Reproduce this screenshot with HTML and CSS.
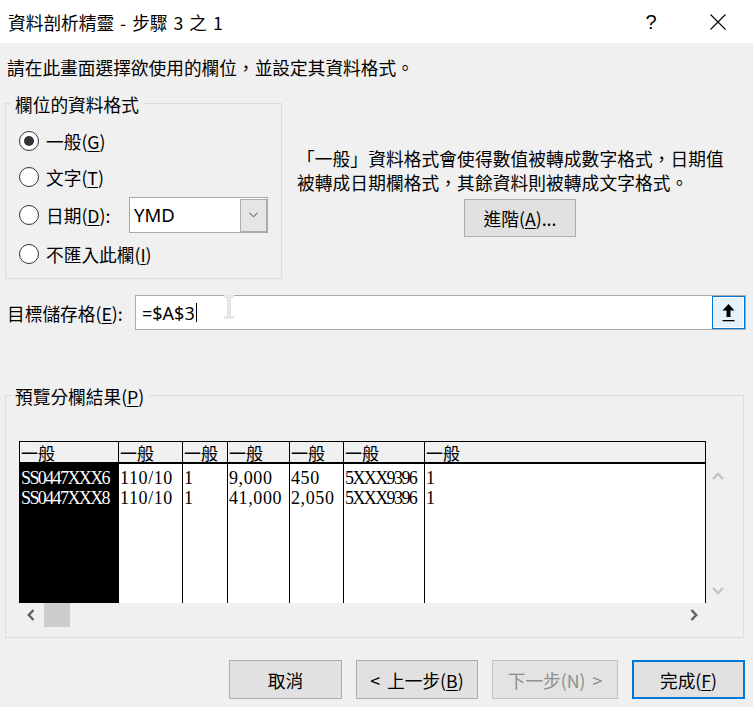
FILE: index.html
```html
<!DOCTYPE html>
<html lang="zh-Hant">
<head>
<meta charset="utf-8">
<title>資料剖析精靈 - 步驟 3 之 1</title>
<link rel="stylesheet" href="styles.css">
</head>
<body>
<div class="titlebar">
  <span class="title">資料剖析精靈 - 步驟 3 之 1</span>
  <span class="help">?</span>
  <span class="close"><svg width="16" height="16" viewBox="0 0 16 16"><path d="M0.5 0.5 L15.5 15.5 M15.5 0.5 L0.5 15.5" stroke="#000" stroke-width="1.1" fill="none"/></svg></span>
</div>
<div class="content">
  <p class="intro">請在此畫面選擇欲使用的欄位，並設定其資料格式。</p>

  <div class="format-row">
    <div class="group format-group">
      <span class="legend">欄位的資料格式</span>
      <div class="radios">
        <div class="radio-row"><span class="radio checked"></span><span class="label">一般(<u>G</u>)</span></div>
        <div class="radio-row"><span class="radio"></span><span class="label">文字(<u>T</u>)</span></div>
        <div class="radio-row date-row"><span class="radio"></span><span class="label date-label">日期(<u>D</u>):</span>
          <div class="combo">
            <span class="combo-value">YMD</span>
            <span class="combo-btn"><svg width="9" height="6" viewBox="0 0 9 6"><path d="M0.5 0.8 L4.5 4.8 L8.5 0.8" stroke="#444" stroke-width="1" fill="none"/></svg></span>
          </div>
        </div>
        <div class="radio-row"><span class="radio"></span><span class="label">不匯入此欄(<u>I</u>)</span></div>
      </div>
    </div>
    <div class="desc">
      <p class="desc-text">「一般」資料格式會使得數值被轉成數字格式，日期值<br>被轉成日期欄格式，其餘資料則被轉成文字格式。</p>
      <button class="btn advanced">進階(<u>A</u>)...</button>
    </div>
  </div>

  <div class="target-row">
    <span class="target-label">目標儲存格(<u>E</u>):</span>
    <div class="ref-input">
      <span class="ref-text">=$A$3<span class="caret"></span></span>
      <svg class="ibeam" width="14" height="24" viewBox="0 0 14 24"><path d="M2 1 H12 M7 1 V23 M2 23 H12" stroke="#c8c8c8" stroke-width="3" fill="none"/><path d="M2 1 H12 M7 1 V23 M2 23 H12" stroke="#f4f4f4" stroke-width="1.4" fill="none"/></svg>
      <span class="ref-btn"><svg width="13" height="18" viewBox="0 0 13 18"><polygon points="6.5,0 12.5,6.5 8.5,6.5 8.5,13 4.5,13 4.5,6.5 0.5,6.5" fill="#000"/><rect x="0.5" y="16" width="12" height="1.3" fill="#000"/></svg></span>
    </div>
  </div>

  <div class="group preview-group">
    <span class="legend">預覽分欄結果(<u>P</u>)</span>
    <div class="preview">
      <div class="cols head">
        <div class="cell">一般</div>
        <div class="cell">一般</div>
        <div class="cell">一般</div>
        <div class="cell">一般</div>
        <div class="cell">一般</div>
        <div class="cell">一般</div>
        <div class="cell">一般</div>
      </div>
      <div class="corner"></div>
      <div class="cols data">
        <div class="cell sel tight">SS0447XXX6<br>SS0447XXX8</div>
        <div class="cell num">110/10<br>110/10</div>
        <div class="cell num">1<br>1</div>
        <div class="cell num">9,000<br>41,000</div>
        <div class="cell num">450<br>2,050</div>
        <div class="cell tight">5XXX9396<br>5XXX9396</div>
        <div class="cell num">1<br>1</div>
      </div>
      <div class="vscroll">
        <span class="sbtn"><svg width="12" height="8" viewBox="0 0 12 8"><path d="M1 7 L6 2 L11 7" stroke="#c4c4c4" stroke-width="2.4" fill="none"/></svg></span>
        <span class="sbtn"><svg width="12" height="8" viewBox="0 0 12 8"><path d="M1 1 L6 6 L11 1" stroke="#c4c4c4" stroke-width="2.4" fill="none"/></svg></span>
      </div>
      <div class="hscroll">
        <span class="sbtn"><svg width="8" height="12" viewBox="0 0 8 12"><path d="M6.5 1 L1.8 6 L6.5 11" stroke="#606060" stroke-width="2.4" fill="none"/></svg></span>
        <span class="thumb"></span>
        <span class="sbtn right"><svg width="8" height="12" viewBox="0 0 8 12"><path d="M1.5 1 L6.2 6 L1.5 11" stroke="#606060" stroke-width="2.4" fill="none"/></svg></span>
      </div>
    </div>
  </div>

  <div class="buttons">
    <button class="btn b-cancel">取消</button>
    <button class="btn b-back">&lt; 上一步(<u>B</u>)</button>
    <button class="btn b-next" disabled>下一步(N) &gt;</button>
    <button class="btn b-finish">完成(<u>F</u>)</button>
  </div>
</div>
</body>
</html>
```

FILE: styles.css
```css
* { box-sizing: border-box; }
html, body { margin: 0; padding: 0; }
body {
  width: 753px;
  height: 707px;
  overflow: hidden;
  background: #f0f0f0;
  font-family: "Noto Sans CJK TC", "Noto Sans", sans-serif;
  font-size: 17.7px;
  color: #000;
}
u { text-decoration-thickness: 1px; text-underline-offset: 2px; }

.titlebar {
  height: 43px;
  background: #fff;
  display: flex;
  align-items: center;
  padding-left: 8px;
  padding-right: 12px;
}
.title { flex: 1; line-height: 24px; word-spacing: 2px; }
.help {
  width: 30px;
  text-align: center;
  font-family: "Liberation Sans", sans-serif;
  font-size: 20px;
  line-height: 24px;
}
.close {
  width: 46px;
  margin-left: 29px;
  display: flex;
  justify-content: center;
}

.content { padding-left: 5px; }
.intro { margin: 12px 0 0 2px; line-height: 24px; }

.group { border: 1px solid #dcdcdc; }
.legend {
  display: block;
  width: fit-content;
  margin: -12px 0 0 5px;
  padding: 0 4px;
  line-height: 24px;
  background: #f0f0f0;
}

.format-row { display: flex; margin-top: 24px; }
.format-group { width: 277px; height: 176px; flex: none; }
.radios {
  display: flex;
  flex-direction: column;
  gap: 6px;
  margin-top: 10px;
  padding-left: 13px;
}
.radio-row { display: flex; align-items: center; height: 30px; }
.date-row { height: 36px; margin-top: -1px; }
.radio {
  width: 20px;
  height: 20px;
  flex: none;
  border: 1px solid #333;
  border-radius: 50%;
  background: #fff;
  display: flex;
  align-items: center;
  justify-content: center;
}
.radio.checked::after {
  content: "";
  width: 10px;
  height: 10px;
  border-radius: 50%;
  background: #333;
}
.label { margin-left: 7px; line-height: 24px; }
.date-label { width: 83px; flex: none; }
.combo {
  width: 139px;
  height: 36px;
  border: 1px solid #a9a9a9;
  background: #fff;
  display: flex;
  align-items: center;
}
.combo-value {
  flex: 1;
  padding-left: 4px;
  font-family: "Noto Sans", sans-serif;
  font-size: 18.5px;
  line-height: 24px;
}
.combo-btn {
  width: 27px;
  height: 33px;
  border: 1px solid #adadad;
  background: #e5e5e5;
  display: flex;
  align-items: center;
  justify-content: center;
}

.desc { margin-left: 15px; padding-top: 43px; }
.desc-text { margin: 0; line-height: 24px; white-space: nowrap; letter-spacing: 0.1px; }
.btn {
  font: inherit;
  color: #000;
  background: #e1e1e1;
  border: 1px solid #adadad;
  padding: 0;
  line-height: 24px;
  height: 39px;
}
.advanced { display: block; width: 112px; height: 38px; margin: 5px 0 0 167px; }

.target-row { display: flex; align-items: center; margin-top: 16px; }
.target-label { width: 128px; margin-left: 2px; line-height: 24px; flex: none; }
.ref-input {
  position: relative;
  width: 611px;
  height: 35px;
  border: 1px solid #ababab;
  background: #fff;
  display: flex;
  align-items: center;
}
.ref-text {
  flex: 1;
  display: flex;
  align-items: center;
  padding-left: 6px;
  font-family: "Noto Sans", sans-serif;
  font-size: 18px;
  line-height: 24px;
}
.caret { width: 1px; height: 19px; background: #000; margin-left: 1px; }
.ibeam { position: absolute; left: 86px; top: -1px; }
.ref-btn {
  width: 33px;
  height: 33px;
  border: 1px solid #0078d7;
  background: #e5f1fb;
  box-shadow: inset 0 0 0 1px #fff;
  display: flex;
  align-items: center;
  justify-content: center;
}

.preview-group { width: 739px; height: 243px; margin-top: 65px; }
.preview {
  margin: 33px 0 0 13px;
  display: grid;
  grid-template-columns: 687px 24px;
  grid-template-rows: 23px 139px 24px;
}
.cols { display: grid; grid-template-columns: 99px 64px 45px 62px 54px 81px 282px; }
.head .cell {
  height: 23px;
  border-left: 1px solid #000;
  border-top: 1px solid #000;
  border-bottom: 2px solid #000;
  background: #f0f0f0;
  font-size: 17px;
  line-height: 21px;
  padding-left: 1px;
  white-space: nowrap;
  overflow: hidden;
}
.cell:last-child { border-right: 1px solid #000; }
.data .cell {
  height: 139px;
  border-left: 1px solid #000;
  background: #fff;
  padding: 4px 0 0 1px;
  font-family: "Liberation Serif", serif;
  font-size: 18px;
  line-height: 20px;
  white-space: nowrap;
  overflow: hidden;
}
.data .cell.num { letter-spacing: 0.6px; }
.data .cell.tight { letter-spacing: -1.6px; }
.data .cell.sel { background: #000; color: #fff; }

.vscroll {
  display: flex;
  flex-direction: column;
  justify-content: space-between;
}
.sbtn {
  width: 24px;
  height: 24px;
  display: flex;
  align-items: center;
  justify-content: center;
}
.hscroll { display: flex; align-items: stretch; }
.thumb { width: 26px; margin-left: 1px; background: #cdcdcd; }
.sbtn.right { margin-left: auto; }

.buttons {
  display: flex;
  justify-content: flex-end;
  gap: 14px;
  margin-top: 22px;
  padding-right: 8px;
}
.b-cancel { width: 113px; }
.b-back { width: 122px; word-spacing: 3px; }
.b-next { width: 126px; color: #8f8f8f; border-color: #c2c2c2; background: #e3e3e3; word-spacing: 3px; }
.b-finish { width: 113px; border: 2px solid #0078d7; }
```
